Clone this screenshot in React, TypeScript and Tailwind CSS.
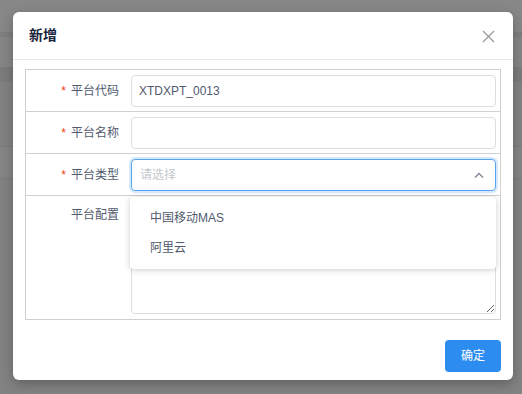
import React from "react";

const font = { fontFamily: '"Liberation Sans", "Noto Sans CJK SC", sans-serif' };

function Label({ text, required }: { text: string; required?: boolean }) {
  return (
    <div className="w-[105px] shrink-0 pr-[12px] flex justify-end items-center text-[12px] text-[#515a6e] leading-[20px]">
      {required && <span className="text-[#ed4014] mr-[5px] text-[12px]">*</span>}
      <span>{text}</span>
    </div>
  );
}

export default function App() {
  return (
    <div className="relative w-[522px] h-[394px] overflow-hidden bg-[#838383]" style={font}>
      {/* page under the mask */}
      <div className="flex flex-col">
        <div className="h-[32px] bg-[#878787]" />
        <div className="h-[5px] bg-[#7e7e7e]" />
        <div className="h-[30px] bg-[#858585]" />
        <div className="h-[15px] bg-[#7b7b7b]" />
        <div className="h-[64px] bg-[#828282]" />
        <div className="h-[1px] bg-[#7a7a7a]" />
        <div className="h-[31px] bg-[#858585]" />
        <div className="h-[1px] bg-[#7c7c7c]" />
        <div className="h-[215px] bg-[#828282]" />
      </div>

      {/* dialog */}
      <div className="absolute left-[13px] top-[12px] w-[500px] h-[368px] bg-white rounded-[6px] shadow-[0_4px_12px_rgba(0,0,0,0.25)] flex flex-col">
        <div className="h-[48px] shrink-0 border-b border-[#e8eaec] flex items-center justify-between pl-[16px] pr-[18px]">
          <span className="text-[14px] font-bold text-[#17233d]">新增</span>
          <svg width="13" height="13" viewBox="0 0 13 13" className="mt-[1px]">
            <path d="M1 1 L12 12 M12 1 L1 12" stroke="#999" strokeWidth="1.3" fill="none" />
          </svg>
        </div>

        <div className="pt-[9px] px-[12px]">
          <div className="border border-[#d0d0d0] flex flex-col">
            <div className="h-[42px] border-b border-[#d0d0d0] flex items-start pt-[5px]">
              <div className="h-[32px] flex items-center"><Label text="平台代码" required /></div>
              <div className="flex-1 mr-[4px] h-[32px] border border-[#dcdee2] rounded-[4px] flex items-center pl-[7px] text-[12px] text-[#515a6e]">
                XTDXPT_0013
              </div>
            </div>
            <div className="h-[42px] border-b border-[#d0d0d0] flex items-start pt-[5px]">
              <div className="h-[32px] flex items-center"><Label text="平台名称" required /></div>
              <div className="flex-1 mr-[4px] h-[32px] border border-[#dcdee2] rounded-[4px]" />
            </div>
            <div className="h-[42px] border-b border-[#d0d0d0] flex items-start pt-[5px] relative z-10">
              <div className="h-[32px] flex items-center"><Label text="平台类型" required /></div>
              <div className="flex-1 mr-[4px] h-[32px] border border-[#57a3f3] rounded-[4px] shadow-[0_0_0_2px_rgba(45,140,240,0.2)] flex items-center justify-between pl-[8px] pr-[11px] text-[12px] text-[#c5c8ce]">
                <span>请选择</span>
                <svg width="10" height="6" viewBox="0 0 10 6">
                  <path d="M1 5.5 L5 1.5 L9 5.5" stroke="#808695" strokeWidth="1.4" fill="none" />
                </svg>
              </div>
              <div className="absolute left-[104px] right-[4px] top-[43px] bg-white rounded-[4px] shadow-[0_1px_6px_rgba(0,0,0,0.2)] py-[6px] flex flex-col text-[12px] text-[#515a6e]">
                <div className="h-[30px] flex items-center pl-[20px]">中国移动MAS</div>
                <div className="h-[30px] flex items-center pl-[20px]">阿里云</div>
              </div>
            </div>
            <div className="h-[123px] flex items-start pt-[5px]">
              <div className="pt-[4px]"><Label text="平台配置" /></div>
              <textarea className="flex-1 mr-[4px] h-[113px] border border-[#dcdee2] rounded-[4px] resize-y outline-none" />
            </div>
          </div>
        </div>

        <div className="flex justify-end pt-[20px] pr-[12px]">
          <button className="w-[56px] h-[32px] rounded-[4px] bg-[#2d8cf0] text-white text-[12px] flex items-center justify-center">
            确定
          </button>
        </div>
      </div>
    </div>
  );
}
